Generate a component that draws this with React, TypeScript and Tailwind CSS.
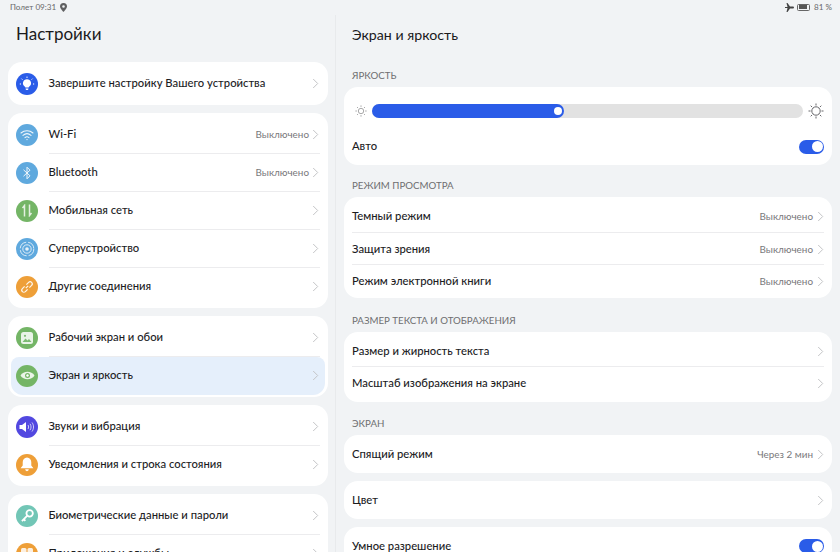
import React from "react";

const Chevron = () => (
  <svg width="7" height="11" viewBox="0 0 7 11" fill="none" className="shrink-0">
    <path d="M1.200 1l4.500 4.500-4.500 4.500" stroke="#c4c5c7" strokeWidth="1" />
  </svg>
);

const Wifi = () => (
  <svg width="14" height="12" viewBox="0 0 14 12" fill="none" stroke="#fff" strokeWidth="1.100" strokeLinecap="round" opacity=".9">
    <path d="M1 4c3.400-3 8.600-3 12 0" />
    <path d="M3 6.300c2.400-2 5.600-2 8 0" />
    <path d="M5 8.600c1.200-1 2.800-1 4 0" />
    <circle cx="7" cy="10.600" r=".7" fill="#fff" stroke="none" />
  </svg>
);
const Bt = () => (
  <svg width="10" height="14" viewBox="0 0 10 14" fill="none" stroke="#fff" strokeWidth="1" opacity=".9">
    <path d="M1.500 3.800L8 9.800 5 12.800V1.200L8 4.200 1.500 10.200" />
  </svg>
);
const Mobile = () => (
  <svg width="12" height="13" viewBox="0 0 12 13" fill="none" stroke="#fff" strokeWidth="1.500" opacity=".8">
    <path d="M3.500 12.500V1.500L1.500 4M8.500.5v11l2-2.500" />
  </svg>
);
const Super = () => (
  <svg width="16" height="16" viewBox="0 0 16 16" fill="none" stroke="#fff" strokeWidth=".9" opacity=".85">
    <circle cx="8" cy="8" r="6.800" strokeDasharray="9 2" />
    <circle cx="8" cy="8" r="4.200" />
    <circle cx="8" cy="8" r="1.800" fill="#fff" stroke="none" />
  </svg>
);
const Link = () => (
  <svg width="14" height="14" viewBox="0 0 14 14" fill="none" stroke="#fff" strokeWidth="1.200" opacity=".9">
    <path d="M5.800 8.200l2.400-2.400M4.600 6.400L2.400 8.600a2.100 2.100 0 003 3l2.200-2.200M9.400 7.600l2.200-2.200a2.100 2.100 0 00-3-3L6.400 4.600" />
  </svg>
);
const Picture = () => (
  <svg width="14" height="14" viewBox="0 0 14 14">
    <rect x="1" y="1" width="12" height="12" rx="2.500" fill="#fff" opacity=".85" />
    <path d="M2.500 11l3-3.500 2 2 1.500-1.500 2.500 3z" fill="#7dbb73" />
    <circle cx="5" cy="4.800" r="1.100" fill="#7dbb73" />
  </svg>
);
const Eye = () => (
  <svg width="15" height="11" viewBox="0 0 15 11">
    <path d="M.5 5.500C3.500.5 11.500.5 14.500 5.500 11.500 10.500 3.500 10.500.5 5.500z" fill="#fff" opacity=".85" />
    <circle cx="7.500" cy="5.500" r="2.500" fill="#74b566" />
    <circle cx="7.500" cy="5.500" r="1.200" fill="#fff" />
  </svg>
);
const Sound = () => (
  <svg width="16" height="12" viewBox="0 0 16 12" fill="none">
    <path d="M.5 4h2.500L7 1v10L3 8H.5z" fill="#fff" />
    <path d="M9 4c.8 1.200.8 2.800 0 4M11 2.800c1.400 2 1.400 4.400 0 6.400M13 1.500c2 2.700 2 6.300 0 9" stroke="#fff" strokeWidth=".9" opacity=".8" />
  </svg>
);
const Bell = () => (
  <svg width="14" height="15" viewBox="0 0 13 14" fill="#fff">
    <path d="M6.500.5c2.500 0 4 2 4 4.500v3l2 2.500H.5l2-2.500V5c0-2.500 1.500-4.500 4-4.500z" />
    <path d="M4.800 11.500h3.400a1.700 1.700 0 01-3.400 0z" />
  </svg>
);
const Key = () => (
  <svg width="15" height="15" viewBox="0 0 14 14" fill="none" stroke="#fff" strokeWidth="1.700">
    <circle cx="9" cy="5" r="3" />
    <path d="M6.800 7.200L1.800 12.200M3.500 10.500l1.500 1.500" />
  </svg>
);
const Bulb = () => (
  <svg width="16" height="16" viewBox="0 0 16 16" fill="#fff">
    <path d="M8 3.200a4 4 0 00-2.300 7.300c.4.300.6.700.6 1.100h3.400c0-.4.200-.8.600-1.100A4 4 0 008 3.200z" />
    <path d="M6.600 12.400h2.800v.6a1 1 0 01-1 1H7.600a1 1 0 01-1-1z" />
    <path d="M8 .6v1.300M2.500 2.700l.9.900M13.500 2.700l-.9.900M.8 8h1.200M14 8h1.200" stroke="#fff" strokeWidth="1" />
  </svg>
);
const Apps = () => (
  <svg width="14" height="14" viewBox="0 0 14 14" fill="#fff" opacity=".85">
    <rect x="1" y="1" width="5.500" height="6" rx="1.500" />
    <rect x="7.500" y="1" width="5.500" height="6" rx="1.500" />
    <rect x="1" y="8" width="5.500" height="5" rx="1.500" />
    <rect x="7.500" y="8" width="5.500" height="5" rx="1.500" />
  </svg>
);

const Sun = ({ size, color, r }: { size: number; color: string; r: number }) => (
  <svg width={size} height={size} viewBox="0 0 16 16" fill="none" stroke={color} strokeWidth="1" className="shrink-0">
    <circle cx="8" cy="8" r={r} />
    <path d="M8 .5v2M8 13.500v2M.5 8h2M13.500 8h2M2.700 2.700l1.400 1.400M11.900 11.900l1.400 1.400M2.700 13.300l1.400-1.400M11.900 4.100l1.400-1.400" />
  </svg>
);

const Toggle = () => (
  <div className="flex h-[14px] w-[25px] items-center justify-end rounded-full bg-[#2a5ce8] pr-[1.500px]">
    <div className="h-[11px] w-[11px] rounded-full bg-white" />
  </div>
);

type LeftProps = {
  color: string;
  icon: React.ReactNode;
  label: string;
  value?: string;
  last?: boolean;
  active?: boolean;
};

const LeftRow = ({ color, icon, label, value, last, active }: LeftProps) => (
  <div className={active ? "flex h-[38px] items-center rounded-b-[12px] rounded-t-[8px] bg-[#e5effb] pl-[5px] pr-[5px]" : "flex h-[38px] items-center pl-[5px] pr-[5px]"}>
    <div className="flex h-[22px] w-[22px] shrink-0 items-center justify-center rounded-full" style={{ backgroundColor: color }}>
      {icon}
    </div>
    <div className={last || active ? "ml-[10.500px] flex h-full flex-1 items-center pr-[1px] pt-[0.5px]" : "ml-[10.500px] flex h-full flex-1 items-center border-b border-[#ececee] pr-[1px] pt-[1.500px]"}>
      <span className="flex-1 text-[11.250px] font-medium text-[#1d1d1f]">{label}</span>
      {value && <span className="mr-[3px] text-[9.900px] text-[#79797b]">{value}</span>}
      <Chevron />
    </div>
  </div>
);

const LeftCard = ({ children }: { children: React.ReactNode }) => (
  <div className="rounded-[14px] bg-white px-[3px] py-[2.500px]">{children}</div>
);

const RightRow = ({ label, value, tall, last, toggle }: { label: string; value?: string; tall?: boolean; last?: boolean; toggle?: boolean }) => (
  <div className={tall ? "flex h-[32.500px] items-center" : "flex h-[38px] items-center"}>
    <div className={last ? "flex h-full flex-1 items-center pt-[1px]" : "flex h-full flex-1 items-center border-b border-[#ececee] pt-[1.500px]"}>
      <span className="flex-1 text-[11.250px] font-medium text-[#1d1d1f]">{label}</span>
      {value && <span className="mr-[4px] text-[9.900px] text-[#79797b]">{value}</span>}
      {toggle ? <Toggle /> : <Chevron />}
    </div>
  </div>
);

const SectionTitle = ({ children, className }: { children: React.ReactNode; className: string }) => (
  <div className={"px-[8px] text-[9.700px] leading-[12px] text-[#6e6e70] " + className}>{children}</div>
);

export default function App() {
  return (
    <div className="flex h-[552px] w-[840px] flex-col overflow-hidden bg-[#f1f3f5] font-['Lato',sans-serif]">
      <div className="flex h-[15px] shrink-0 items-center justify-between pl-[10px] pr-[8px] text-[8.100px] text-[#69696b]">
        <div className="flex items-center gap-[4px]">
          <span>Полет 09:31</span>
          <svg width="7" height="9" viewBox="0 0 7 9">
            <path fillRule="evenodd" d="M3.500 0a3.500 3.500 0 013.500 3.500C7 5.500 3.500 9 3.500 9S0 5.500 0 3.500A3.500 3.500 0 013.500 0zm0 2.200a1.300 1.300 0 100 2.600 1.300 1.300 0 000-2.600z" fill="#5f5f61" />
          </svg>
        </div>
        <div className="flex items-center gap-[3px]">
          <svg width="9" height="9" viewBox="0 0 9 9" fill="#444">
            <path d="M0 4h2.500L1.500 0h1l2.500 3.500h3a.6.6 0 010 2H5L2.500 9h-1l1-4H0z" />
          </svg>
          <div className="flex h-[7px] w-[13px] items-center rounded-[1.500px] border border-[#666] p-[0.5px]">
            <div className="h-full w-[80%] bg-[#555]" />
          </div>
          <span className="ml-[1px]">81 %</span>
        </div>
      </div>

      <div className="flex min-h-0 flex-1">
        <div className="w-[336px] shrink-0 border-r border-[#e8eaec] pl-[8px] pr-[7px]">
          <h1 className="ml-[8px] mt-[6px] text-[17px] font-normal leading-[26px] text-[#1a1a1c]">Настройки</h1>
          <div className="mt-[15px] flex flex-col gap-[8px]">
            <LeftCard>
              <LeftRow color="#2a5ce8" icon={<Bulb />} label="Завершите настройку Вашего устройства" last />
            </LeftCard>
            <LeftCard>
              <LeftRow color="#5fa9de" icon={<Wifi />} label="Wi-Fi" value="Выключено" />
              <LeftRow color="#5fa9de" icon={<Bt />} label="Bluetooth" value="Выключено" />
              <LeftRow color="#74b566" icon={<Mobile />} label="Мобильная сеть" />
              <LeftRow color="#5fa9de" icon={<Super />} label="Суперустройство" />
              <LeftRow color="#ee9f38" icon={<Link />} label="Другие соединения" last />
            </LeftCard>
            <LeftCard>
              <LeftRow color="#74b566" icon={<Picture />} label="Рабочий экран и обои" />
              <LeftRow color="#74b566" icon={<Eye />} label="Экран и яркость" active />
            </LeftCard>
            <LeftCard>
              <LeftRow color="#5248e0" icon={<Sound />} label="Звуки и вибрация" />
              <LeftRow color="#ee9f38" icon={<Bell />} label="Уведомления и строка состояния" last />
            </LeftCard>
            <LeftCard>
              <LeftRow color="#72c6b6" icon={<Key />} label="Биометрические данные и пароли" />
              <LeftRow color="#ee9f38" icon={<Apps />} label="Приложения и службы" last />
            </LeftCard>
          </div>
        </div>

        <div className="flex-1 pl-[8px] pr-[8px]">
          <h2 className="ml-[8px] mt-[7px] text-[14.200px] font-normal leading-[26px] text-[#1a1a1c]">Экран и яркость</h2>
          <SectionTitle className="mt-[21px]">ЯРКОСТЬ</SectionTitle>
          <div className="mt-[6px] rounded-[14px] bg-white px-[8px] pt-[16px]">
            <div className="flex items-center">
              <div className="ml-[3px]">
                <Sun size={12} color="#8d8d8f" r={3.600} />
              </div>
              <div className="ml-[5px] h-[14px] flex-1 rounded-full bg-[#e2e2e2]">
                <div className="flex h-full w-[192px] items-center justify-end rounded-full bg-[#2a5ce8] pr-[2px]">
                  <div className="h-[8px] w-[8px] rounded-full bg-white" />
                </div>
              </div>
              <div className="ml-[5px]">
                <Sun size={16} color="#66666a" r={4.200} />
              </div>
            </div>
            <div className="mt-[8px] flex h-[38px] items-center justify-between pt-[1px]">
              <span className="text-[11.250px] font-medium text-[#1d1d1f]">Авто</span>
              <Toggle />
            </div>
          </div>

          <SectionTitle className="mt-[14px]">РЕЖИМ ПРОСМОТРА</SectionTitle>
          <div className="mt-[6px] rounded-[14px] bg-white px-[8px] pt-[3px]">
            <RightRow tall label="Темный режим" value="Выключено" />
            <RightRow tall label="Защита зрения" value="Выключено" />
            <RightRow tall last label="Режим электронной книги" value="Выключено" />
          </div>

          <SectionTitle className="mt-[16px]">РАЗМЕР ТЕКСТА И ОТОБРАЖЕНИЯ</SectionTitle>
          <div className="mt-[6px] rounded-[14px] bg-white px-[8px] pb-[2px] pt-[3px]">
            <RightRow tall label="Размер и жирность текста" />
            <RightRow tall last label="Масштаб изображения на экране" />
          </div>

          <SectionTitle className="mt-[15px]">ЭКРАН</SectionTitle>
          <div className="mt-[6px] rounded-[14px] bg-white px-[8px]">
            <RightRow last label="Спящий режим" value="Через 2 мин" />
          </div>
          <div className="mt-[8px] rounded-[14px] bg-white px-[8px]">
            <RightRow last label="Цвет" />
          </div>
          <div className="mt-[8px] rounded-[14px] bg-white px-[8px]">
            <RightRow last toggle label="Умное разрешение" />
          </div>
        </div>
      </div>
    </div>
  );
}
